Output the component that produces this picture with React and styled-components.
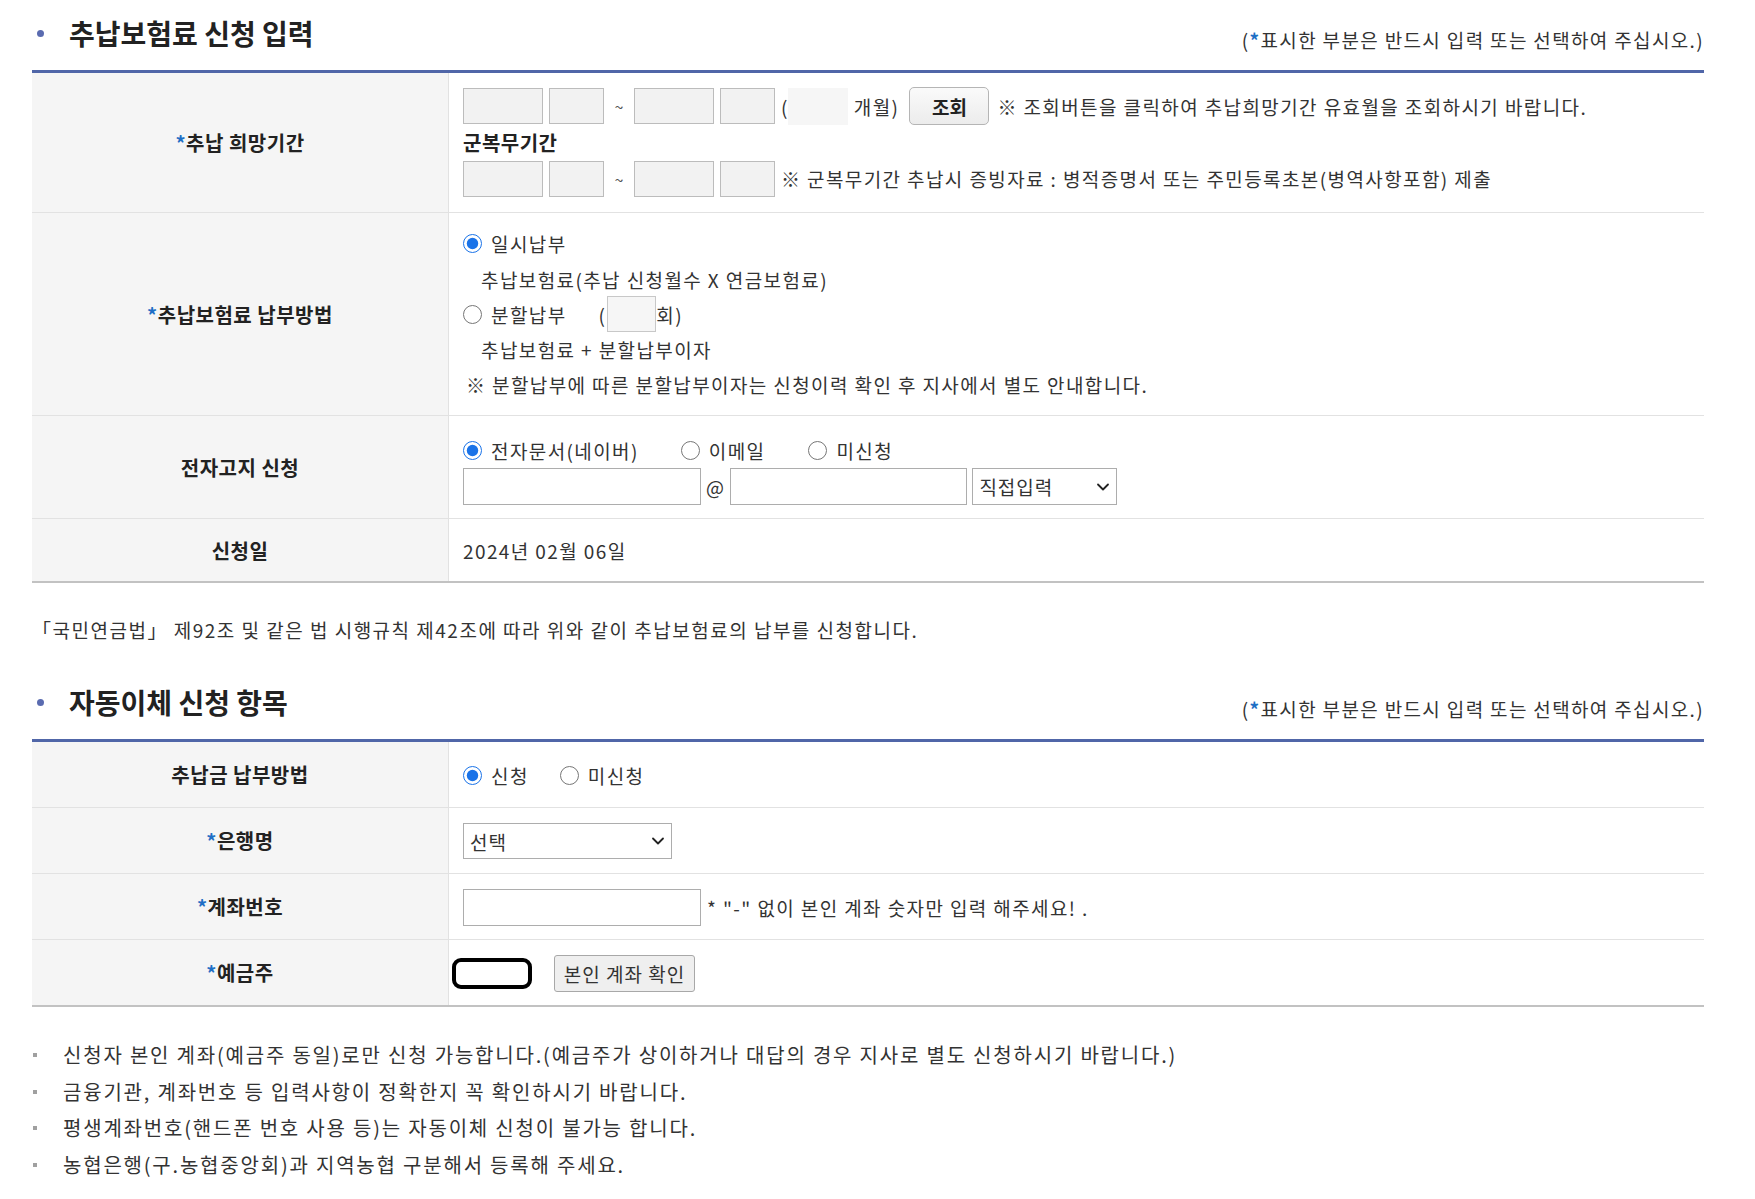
import styled, { createGlobalStyle } from 'styled-components'
import { ChevronDown } from 'lucide-react'

const GlobalStyle = createGlobalStyle`
  body {
    margin: 0;
    background: #fff;
    color: #333;
    font-family: "Noto Sans CJK KR", "Noto Sans", sans-serif;
  }
  * { box-sizing: border-box; }
`

const Page = styled.div`
  width: 1672px;
  margin-left: 32px;
  padding-bottom: 40px;
`

const SectionHeader = styled.div`
  display: flex;
  justify-content: space-between;
  align-items: flex-end;
  height: 70px;
  padding-bottom: 17px;
`

const Title = styled.h2`
  display: flex;
  align-items: center;
  gap: 25px;
  margin: 0 0 2px 0;
  font-size: 28px;
  line-height: 36px;
  font-weight: 700;
  color: #222;
  &::before {
    content: '';
    width: 7px;
    height: 7px;
    margin-left: 5px;
    border-radius: 50%;
    background: #5a6bb0;
  }
`

const Note = styled.p`
  margin: 0;
  font-size: 19px;
  line-height: 26px;
  letter-spacing: 1.35px;
  color: #333;
`

const Star = styled.span`
  color: #1f6fc5;
  font-weight: 700;
`

const Table = styled.div`
  border-top: 3px solid #5066a8;
  border-bottom: 2px solid #c2c2c2;
`

const Row = styled.div`
  display: grid;
  grid-template-columns: 417px 1fr;
  border-bottom: 1px solid #e2e2e2;
  &:last-child { border-bottom: 0; }
`

const Label = styled.div`
  display: flex;
  align-items: center;
  justify-content: center;
  background: #f5f5f5;
  border-right: 1px solid #e2e2e2;
  font-size: 20px;
  font-weight: 700;
  letter-spacing: 0.5px;
  color: #222;
`

const Cell = styled.div`
  display: flex;
  flex-direction: column;
  padding: ${p => p.$pad || '15px 0 14px 14px'};
  background: #fff;
`

const Line = styled.div`
  display: flex;
  align-items: center;
  gap: ${p => p.$gap ?? 6}px;
  height: ${p => p.$h || 36}px;
  padding-left: ${p => p.$indent || 0}px;
  font-size: 19px;
  letter-spacing: 1.4px;
  color: #333;
  white-space: nowrap;
`

const SubTitle = styled.div`
  display: flex;
  align-items: center;
  height: 36px;
  font-size: 20px;
  font-weight: 700;
  letter-spacing: 0.5px;
  color: #222;
`

const DateBox = styled.input`
  width: ${p => p.$w}px;
  height: 36px;
  border: 1px solid #bcbcbc;
  background: #f2f2f2;
  margin: 0;
`

const Tilde = styled.span`
  width: 18px;
  text-align: center;
  font-size: 16px;
  letter-spacing: 0;
  color: #555;
`

const MonthBox = styled.span`
  display: inline-block;
  width: 60px;
  height: 37px;
  background: #f6f6f6;
  margin-left: -7px;
`

const SearchButton = styled.button`
  width: 80px;
  height: 38px;
  margin: 0 2px 0 4px;
  border: 1px solid #b5b5b5;
  border-radius: 5px;
  background: linear-gradient(#fafafa, #ececec);
  font-family: inherit;
  font-size: 19px;
  font-weight: 700;
  color: #222;
`

const TextInput = styled.input`
  width: ${p => p.$w}px;
  height: 37px;
  margin: 0;
  border: 1px solid #adadad;
  background: #fff;
  font-family: inherit;
  font-size: 18px;
`

const SelectWrap = styled.span`
  position: relative;
  display: inline-flex;
  width: ${p => p.$w}px;
  height: ${p => p.$h || 37}px;
  svg {
    position: absolute;
    right: 4px;
    top: 50%;
    transform: translateY(-50%);
    pointer-events: none;
    color: #222;
  }
`

const Select = styled.select`
  appearance: none;
  width: 100%;
  height: 100%;
  padding: 0 6px;
  border: 1px solid #adadad;
  border-radius: 0;
  background: #fff;
  font-family: inherit;
  font-size: 19px;
  letter-spacing: 1px;
  color: #333;
`

const SmallBox = styled.span`
  display: inline-block;
  width: 49px;
  height: 36px;
  margin-left: 1px;
  border: 1px solid #c8c8c8;
  background: #f6f6f6;
`

const RadioLabel = styled.label`
  display: inline-flex;
  align-items: center;
  gap: 9px;
  margin-right: ${p => p.$mr || 0}px;
  font-size: 19px;
  letter-spacing: 1.4px;
  color: #333;
  input {
    width: 19px;
    height: 19px;
    margin: 0;
    accent-color: #1a73e8;
  }
`

const Spacer = styled.span`
  display: inline-block;
  width: ${p => p.$w}px;
`

const HolderInput = styled.input`
  width: 80px;
  height: 31px;
  margin: 0 22px 0 -11px;
  border: 4px solid #000;
  border-radius: 9px;
  background: #fff;
`

const CheckButton = styled.button`
  width: 141px;
  height: 37px;
  border: 1px solid #a8a8a8;
  border-radius: 3px;
  background: #efefef;
  font-family: inherit;
  font-size: 19px;
  letter-spacing: 1px;
  color: #333;
`

const LawText = styled.p`
  margin: 34px 0 26px 0;
  font-size: 19px;
  line-height: 26px;
  letter-spacing: 1.5px;
  color: #333;
`

const Notice = styled.ul`
  list-style: none;
  margin: 30px 0 0 0;
  padding: 0;
`

const NoticeItem = styled.li`
  position: relative;
  padding-left: 31px;
  height: 36.6px;
  line-height: 36px;
  font-size: 20px;
  letter-spacing: 1.8px;
  color: #333;
  &::before {
    content: '';
    position: absolute;
    left: 1px;
    top: 16px;
    width: 4px;
    height: 4px;
    background: #a0a0a0;
  }
`

const RequiredNote = () => (
  <Note>
    (<Star>*</Star>표시한 부분은 반드시 입력 또는 선택하여 주십시오.)
  </Note>
)

const Req = ({ children }) => (
  <Label>
    <Star>*</Star>
    {children}
  </Label>
)

const PeriodInputs = () => (
  <>
    <DateBox $w={80} disabled />
    <DateBox $w={55} disabled />
    <Tilde>~</Tilde>
    <DateBox $w={80} disabled />
    <DateBox $w={55} disabled />
  </>
)

const Dropdown = ({ w, h, label }) => (
  <SelectWrap $w={w} $h={h}>
    <Select defaultValue="a">
      <option value="a">{label}</option>
    </Select>
    <ChevronDown size={20} strokeWidth={2.2} />
  </SelectWrap>
)

const notices = [
  '신청자 본인 계좌(예금주 동일)로만 신청 가능합니다.(예금주가 상이하거나 대답의 경우 지사로 별도 신청하시기 바랍니다.)',
  '금융기관, 계좌번호 등 입력사항이 정확한지 꼭 확인하시기 바랍니다.',
  '평생계좌번호(핸드폰 번호 사용 등)는 자동이체 신청이 불가능 합니다.',
  '농협은행(구.농협중앙회)과 지역농협 구분해서 등록해 주세요.',
]

export default function App() {
  return (
    <Page>
      <GlobalStyle />
      <SectionHeader>
        <Title>추납보험료 신청 입력</Title>
        <RequiredNote />
      </SectionHeader>

      <Table>
        <Row>
          <Req>추납 희망기간</Req>
          <Cell $pad="15px 0 15px 14px">
            <Line>
              <PeriodInputs />
              <span>(</span>
              <MonthBox />
              <span>개월)</span>
              <SearchButton type="button">조회</SearchButton>
              <span>※ 조회버튼을 클릭하여 추납희망기간 유효월을 조회하시기 바랍니다.</span>
            </Line>
            <SubTitle>군복무기간</SubTitle>
            <Line $h={37}>
              <PeriodInputs />
              <span>※ 군복무기간 추납시 증빙자료 : 병적증명서 또는 주민등록초본(병역사항포함) 제출</span>
            </Line>
          </Cell>
        </Row>

        <Row>
          <Req>추납보험료 납부방법</Req>
          <Cell $pad="12px 0 14px 14px">
            <Line>
              <RadioLabel>
                <input type="radio" name="pay" defaultChecked />
                일시납부
              </RadioLabel>
            </Line>
            <Line $indent={18}>추납보험료(추납 신청월수 X 연금보험료)</Line>
            <Line $gap={0} $h={34}>
              <RadioLabel>
                <input type="radio" name="pay" />
                분할납부
              </RadioLabel>
              <Spacer $w={32} />
              <span>(</span>
              <SmallBox />
              <span>회)</span>
            </Line>
            <Line $indent={18}>추납보험료 + 분할납부이자</Line>
            <Line $h={34} $indent={3}>※ 분할납부에 따른 분할납부이자는 신청이력 확인 후 지사에서 별도 안내합니다.</Line>
          </Cell>
        </Row>

        <Row>
          <Label>전자고지 신청</Label>
          <Cell $pad="16px 0 13px 14px">
            <Line $gap={0}>
              <RadioLabel $mr={42}>
                <input type="radio" name="notice" defaultChecked />
                전자문서(네이버)
              </RadioLabel>
              <RadioLabel $mr={43}>
                <input type="radio" name="notice" />
                이메일
              </RadioLabel>
              <RadioLabel>
                <input type="radio" name="notice" />
                미신청
              </RadioLabel>
            </Line>
            <Line $h={37} $gap={5}>
              <TextInput $w={238} />
              <span>@</span>
              <TextInput $w={237} />
              <Dropdown w={145} label="직접입력" />
            </Line>
          </Cell>
        </Row>

        <Row>
          <Label>신청일</Label>
          <Cell $pad="13px 0 13px 14px">
            <Line>2024년 02월 06일</Line>
          </Cell>
        </Row>
      </Table>

      <LawText>「국민연금법」 제92조 및 같은 법 시행규칙 제42조에 따라 위와 같이 추납보험료의 납부를 신청합니다.</LawText>

      <SectionHeader>
        <Title>자동이체 신청 항목</Title>
        <RequiredNote />
      </SectionHeader>

      <Table>
        <Row>
          <Label>추납금 납부방법</Label>
          <Cell>
            <Line $gap={0}>
              <RadioLabel $mr={31}>
                <input type="radio" name="auto" defaultChecked />
                신청
              </RadioLabel>
              <RadioLabel>
                <input type="radio" name="auto" />
                미신청
              </RadioLabel>
            </Line>
          </Cell>
        </Row>
        <Row>
          <Req>은행명</Req>
          <Cell>
            <Line>
              <Dropdown w={209} h={36} label="선택" />
            </Line>
          </Cell>
        </Row>
        <Row>
          <Req>계좌번호</Req>
          <Cell>
            <Line>
              <TextInput $w={238} />
              <span>* "-" 없이 본인 계좌 숫자만 입력 해주세요! .</span>
            </Line>
          </Cell>
        </Row>
        <Row>
          <Req>예금주</Req>
          <Cell>
            <Line $gap={0}>
              <HolderInput />
              <CheckButton type="button">본인 계좌 확인</CheckButton>
            </Line>
          </Cell>
        </Row>
      </Table>

      <Notice>
        {notices.map(text => (
          <NoticeItem key={text}>{text}</NoticeItem>
        ))}
      </Notice>
    </Page>
  )
}
